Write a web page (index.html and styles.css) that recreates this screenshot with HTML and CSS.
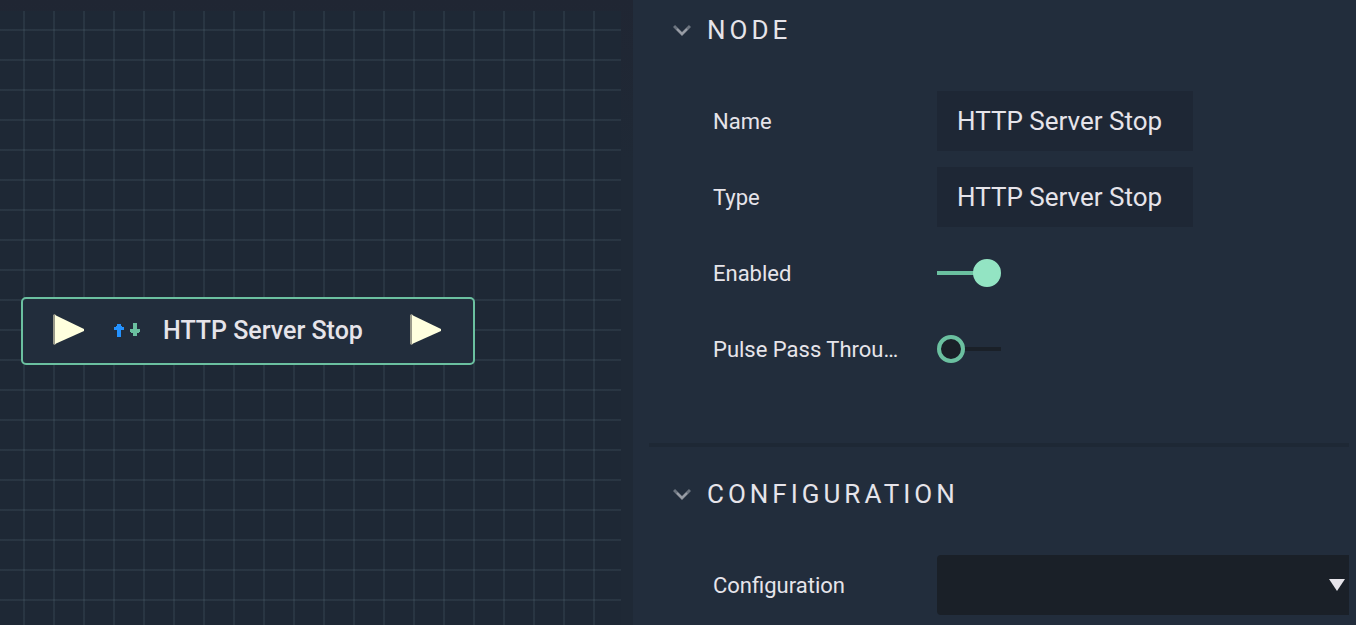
FILE: index.html
```html
<!DOCTYPE html>
<html lang="en">
<head>
<meta charset="utf-8">
<meta name="viewport" content="width=device-width, initial-scale=1">
<title>HTTP Server Stop</title>
<link rel="stylesheet" href="styles.css">
</head>
<body>
<div class="editor">
  <main class="graph">
    <div class="grid">
      <div class="graph-node">
        <svg class="port" viewBox="0 0 31 31" aria-hidden="true"><path class="port-edge" d="M0 1 1.500 0 3 1V30L1.500 31 0 30z"/><path class="port-fill" d="M2 1 31 15v2L2 30z"/></svg>
        <svg class="traffic" viewBox="0 0 28 14" aria-hidden="true"><path class="up" d="M4 1h4v2h1v1h2v3H8v7H4V7H1V4h2V3h1z"/><path class="down" d="M20 0h4v6h3v3h-1v1h-2v3h-4v-3h-2V9h-1V6h3z"/></svg>
        <span class="node-title">HTTP Server Stop</span>
        <svg class="port" viewBox="0 0 31 31" aria-hidden="true"><path class="port-edge" d="M0 1 1.500 0 3 1V30L1.500 31 0 30z"/><path class="port-fill" d="M2 1 31 15v2L2 30z"/></svg>
      </div>
    </div>
  </main>
  <aside class="inspector">
    <section class="section">
      <h2 class="heading"><button class="toggle" type="button" aria-expanded="true"><svg class="chevron" viewBox="0 0 18 12" aria-hidden="true"><path class="chevron-soft" d="M1 2 9 10l8-8"/><path d="M4 5l5 5 5-5"/></svg>NODE</button></h2>
      <div class="rows">
        <div class="row"><label class="label" for="name">Name</label><input class="field" id="name" type="text" value="HTTP Server Stop"></div>
        <div class="row"><label class="label" for="type">Type</label><input class="field" id="type" type="text" value="HTTP Server Stop" readonly></div>
        <div class="row"><label class="label" for="enabled">Enabled</label><input class="switch" id="enabled" type="checkbox" checked></div>
        <div class="row"><label class="label" for="pulse">Pulse Pass Throu…</label><input class="switch" id="pulse" type="checkbox"></div>
      </div>
    </section>
    <section class="section">
      <h2 class="heading"><button class="toggle" type="button" aria-expanded="true"><svg class="chevron" viewBox="0 0 18 12" aria-hidden="true"><path class="chevron-soft" d="M1 2 9 10l8-8"/><path d="M4 5l5 5 5-5"/></svg>CONFIGURATION</button></h2>
      <div class="rows">
        <div class="row"><label class="label" for="configuration">Configuration</label>
          <div class="select-wrap"><select class="select" id="configuration"><option></option></select><svg class="arrow" viewBox="0 0 16 12" aria-hidden="true"><path d="M0 0h16L8 12z"/></svg></div>
        </div>
      </div>
    </section>
  </aside>
</div>
</body>
</html>
```
FILE: styles.css
```css
*, *::before { box-sizing: border-box; }
body {
  margin: 0;
  background: #222d3c;
  color: #e6e4ea;
  font-family: Roboto, "Liberation Sans", sans-serif;
}
.editor {
  display: grid;
  grid-template-columns: 633fr 723fr;
  min-height: 100vh;
}
.graph {
  display: flex;
  padding: 11px 12px 0 0;
  background: linear-gradient(#202633, #1f2936 160px);
}
.grid {
  position: relative;
  flex: 1;
  background-color: #1e2835;
  background-image:
    linear-gradient(90deg, #7c98a01f 2px, transparent 2px),
    linear-gradient(#7c98a01f 2px, transparent 2px);
  background-size: 30px 30px;
  background-position: 23px 18px;
}
.graph-node {
  position: absolute;
  left: 21px;
  top: 286px;
  display: flex;
  align-items: center;
  width: 454px;
  height: 68px;
  padding: 0 32px 4px 30px;
  border: 2px solid #6bc0a0;
  border-radius: 5px;
  background: #222d3c;
}
.port { width: 31px; height: 31px; }
.port-edge { fill: #99998a; }
.port-fill { fill: #ffffde; }
.traffic {
  width: 28px;
  height: 14px;
  margin: 2px 22px 0 29px;
}
.up { fill: #2492ff; }
.down { fill: #6bc0a0; }
.node-title {
  flex: 1;
  padding-top: 4px;
  font-size: 25px;
  font-weight: 500;
  line-height: 30px;
  white-space: nowrap;
}
.inspector { padding: 0 7px 10px 16px; min-width: 0; }
.section + .section {
  margin-top: 64px;
  padding-top: 17px;
  border-top: 4px solid #1e2835;
}
.heading { margin: 0 0 31px; }
.toggle {
  display: flex;
  align-items: center;
  gap: 16px;
  height: 60px;
  padding: 0 0 0 24px;
  border: 0;
  background: none;
  color: inherit;
  font: 400 26px/30px Roboto, "Liberation Sans", sans-serif;
  letter-spacing: 4px;
}
.chevron {
  width: 18px;
  height: 12px;
  fill: none;
  stroke: #9a9ea7;
  stroke-width: 2;
}
.chevron-soft { stroke: #6c747f; stroke-width: 3; }
.rows {
  display: grid;
  gap: 16px;
  padding-left: 64px;
}
.row {
  display: grid;
  grid-template-columns: 192px minmax(0, 1fr);
  column-gap: 32px;
  align-items: center;
  min-height: 60px;
}
.label {
  padding-top: 2px;
  font-size: 22px;
  line-height: 30px;
  white-space: nowrap;
}
.field {
  width: 256px;
  height: 60px;
  padding: 0 20px;
  border: 0;
  background: #1e2735;
  color: inherit;
  font: 400 26px/30px Roboto, "Liberation Sans", sans-serif;
}
.switch {
  appearance: none;
  width: 64px;
  height: 28px;
  margin: 0;
  background: linear-gradient(#1a2028, #1a2028) center / 100% 4px no-repeat;
}
.switch::before {
  content: "";
  display: block;
  width: 28px;
  height: 28px;
  border: 4px solid #6bc0a0;
  border-radius: 50%;
  background: #1a2028;
}
.switch:checked {
  background-image: linear-gradient(90deg, #6bc0a0 50px, transparent 50px);
}
.switch:checked::before {
  margin-left: auto;
  border-color: #93e4c3;
  background: #93e4c3;
}
.select-wrap { position: relative; }
.select {
  appearance: none;
  display: block;
  width: 100%;
  height: 60px;
  padding: 0 40px 0 20px;
  border: 0;
  border-radius: 4px 0 0 4px;
  background: #1a2028;
  color: inherit;
  font: 400 26px/30px Roboto, "Liberation Sans", sans-serif;
}
.arrow {
  position: absolute;
  right: 4px;
  top: 24px;
  width: 16px;
  height: 12px;
  fill: #e6e4ea;
  pointer-events: none;
}
```
